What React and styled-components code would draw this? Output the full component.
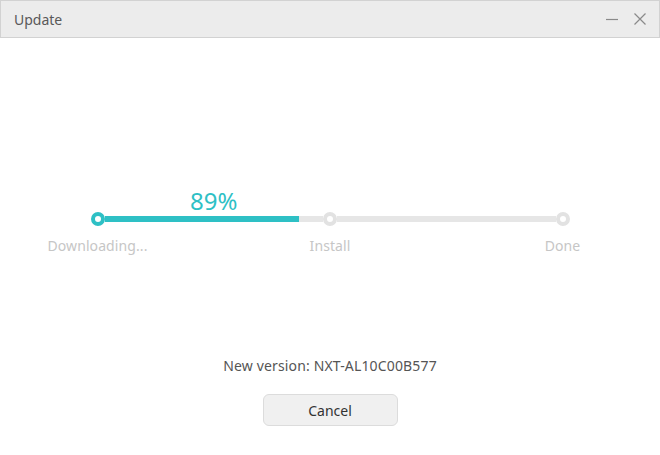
import styled, { createGlobalStyle } from 'styled-components'

const steps = ['Downloading...', 'Install', 'Done']
const progress = 89

function App() {
  return (
    <>
      <GlobalStyle />
      <Window>
        <TitleBar>
          <Title>Update</Title>
          <Controls>
            <IconButton aria-label="minimize">
              <svg width="14" height="14" viewBox="0 0 14 14">
                <path d="M1 7.5h12" stroke="#8a8a8a" strokeWidth="1.2" />
              </svg>
            </IconButton>
            <IconButton aria-label="close">
              <svg width="14" height="14" viewBox="0 0 14 14">
                <path d="M1.5 1.5l11 11M12.5 1.5l-11 11" stroke="#8a8a8a" strokeWidth="1.2" />
              </svg>
            </IconButton>
          </Controls>
        </TitleBar>

        <Content>
          <Stepper>
            <PercentRow>
              <Spacer />
              <Percent>{progress}%</Percent>
              <Spacer />
              <Segment as="span" $blank />
              <Spacer />
            </PercentRow>
            <TrackRow>
              <Dot $active />
              <Segment>
                <Fill style={{ width: `${progress}%` }} />
              </Segment>
              <Dot />
              <Segment />
              <Dot />
            </TrackRow>
            <LabelRow>
              {steps.map((s) => (
                <Label key={s}>{s}</Label>
              ))}
            </LabelRow>
          </Stepper>

          <Version>New version: NXT-AL10C00B577</Version>
          <CancelButton>Cancel</CancelButton>
        </Content>
      </Window>
    </>
  )
}

export default App

const GlobalStyle = createGlobalStyle`
  * {
    margin: 0;
    padding: 0;
    box-sizing: border-box;
  }
  body {
    background: #fff;
    font-family: "Noto Sans", "Open Sans", sans-serif;
  }
`

const Window = styled.div`
  width: 660px;
  height: 455px;
  display: flex;
  flex-direction: column;
  background: #fff;
`

const TitleBar = styled.div`
  height: 38px;
  display: flex;
  align-items: center;
  justify-content: space-between;
  padding: 0 12px 0 13px;
  background: #ececec;
  border: 1px solid #d2d2d2;
`

const Title = styled.span`
  font-size: 14px;
  color: #595959;
`

const Controls = styled.div`
  display: flex;
  gap: 14px;
`

const IconButton = styled.button`
  width: 14px;
  height: 14px;
  border: none;
  background: none;
  display: flex;
  align-items: center;
  justify-content: center;
`

const Content = styled.div`
  display: flex;
  flex-direction: column;
  align-items: center;
  padding-top: 152px;
`

const Stepper = styled.div`
  width: 479px;
  display: flex;
  flex-direction: column;
`

const PercentRow = styled.div`
  display: flex;
  height: 22px;
`

const Spacer = styled.span`
  width: 14px;
  flex: none;
`

const Percent = styled.span`
  flex: 1;
  text-align: center;
  font-size: 24px;
  line-height: 22px;
  color: #2ec0c5;
`

const TrackRow = styled.div`
  display: flex;
  align-items: center;
  height: 14px;
`

const Dot = styled.span`
  width: 14px;
  height: 14px;
  flex: none;
  border-radius: 50%;
  background: #fff;
  border: 4px solid ${(props) => (props.$active ? '#2ec0c5' : '#e2e2e2')};
`

const Segment = styled.div`
  flex: 1;
  height: 6px;
  background: ${(props) => (props.$blank ? 'transparent' : '#e6e6e6')};
`

const Fill = styled.div`
  height: 100%;
  background: #2ec0c5;
`

const LabelRow = styled.div`
  display: flex;
  justify-content: space-between;
  margin-top: 10px;
`

const Label = styled.span`
  width: 14px;
  display: flex;
  justify-content: center;
  white-space: nowrap;
  font-size: 14px;
  line-height: 20px;
  letter-spacing: 0.1px;
  color: #c6c6c6;
`

const Version = styled.p`
  margin-top: 100px;
  font-size: 14px;
  line-height: 20px;
  letter-spacing: 0.15px;
  color: #555;
`

const CancelButton = styled.button`
  margin-top: 18px;
  width: 135px;
  height: 32px;
  border: 1px solid #dcdcdc;
  border-radius: 6px;
  background: #f0f0f0;
  font-family: inherit;
  font-size: 14px;
  color: #333;
`
